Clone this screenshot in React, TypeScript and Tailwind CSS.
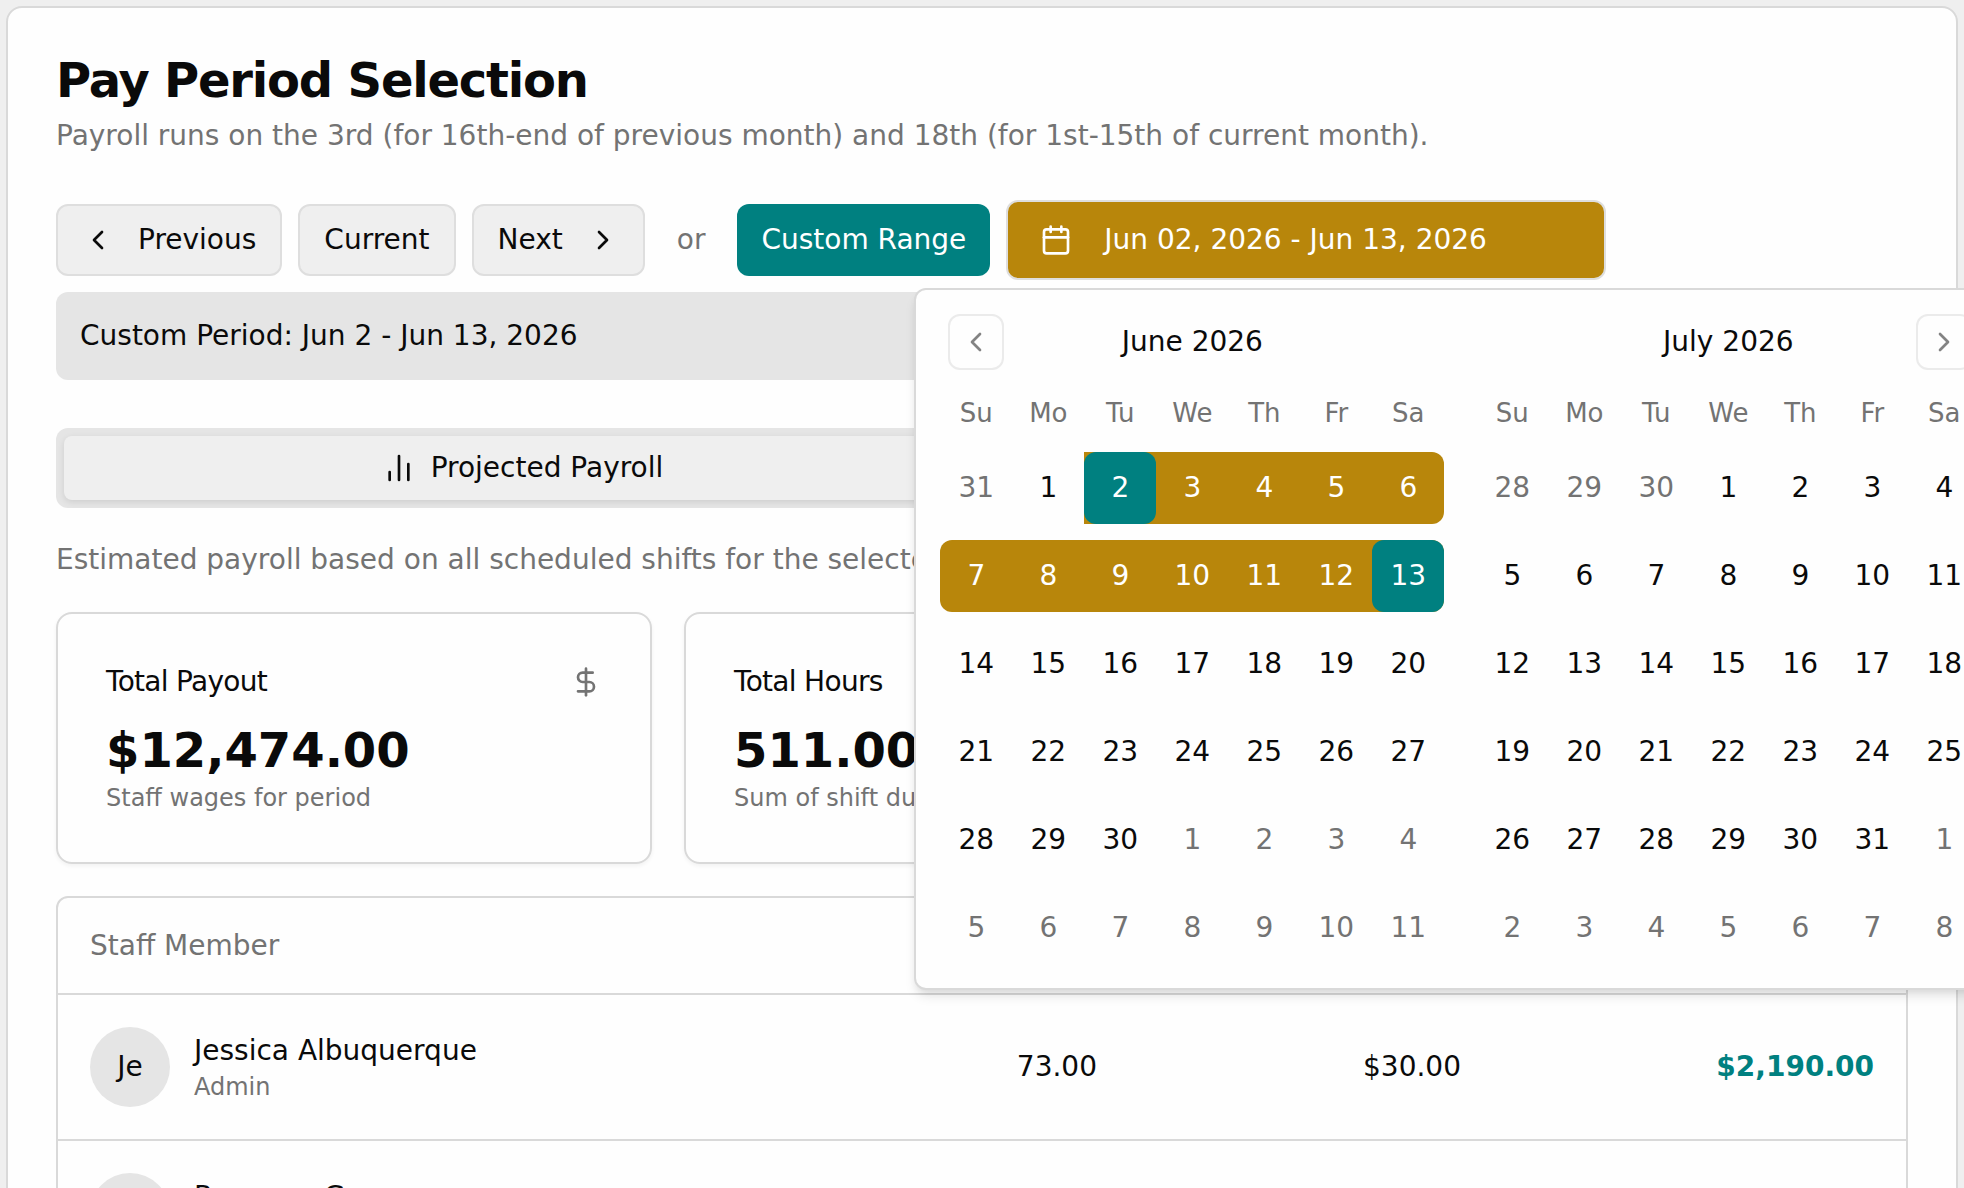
import { useState } from 'react'
import { Calendar as CalendarIcon, ChartNoAxesColumn, ChevronLeft, ChevronRight, Clock, DollarSign, History, Users } from 'lucide-react'
import type { LucideIcon } from 'lucide-react'
import clsx from 'clsx'

const WEEKDAYS = ['Su', 'Mo', 'Tu', 'We', 'Th', 'Fr', 'Sa']
const MONTHS = ['January', 'February', 'March', 'April', 'May', 'June', 'July', 'August', 'September', 'October', 'November', 'December']

const STAFF = [
  { name: 'Jessica Albuquerque', role: 'Admin', hours: 73, rate: 30 },
  { name: 'Roxanne Gomes', role: 'Staff', hours: 73, rate: 26 },
]

const money = (n: number) => '$' + n.toLocaleString('en-US', { minimumFractionDigits: 2 })

// always six weeks, so both months keep the same height
function getWeeks(year: number, month: number) {
  const offset = new Date(year, month, 1).getDay()
  return Array.from({ length: 6 }, (_, w) =>
    Array.from({ length: 7 }, (_, d) => new Date(year, month, 1 - offset + w * 7 + d))
  )
}

type MonthProps = {
  year: number
  month: number
  from: Date
  to: Date
  onPrev?: () => void
  onNext?: () => void
}

function NavButton({ label, icon: Icon, onClick }: { label: string; icon: LucideIcon; onClick: () => void }) {
  return (
    <button
      aria-label={label}
      onClick={onClick}
      className="flex size-14 items-center justify-center rounded-xl border-2 border-[#d9d9d9] opacity-50 hover:opacity-100"
    >
      <Icon className="size-8" />
    </button>
  )
}

function Month({ year, month, from, to, onPrev, onNext }: MonthProps) {
  return (
    <div>
      <div className="flex h-14 items-center justify-between px-2">
        <div className="w-14">{onPrev && <NavButton label="Previous month" icon={ChevronLeft} onClick={onPrev} />}</div>
        <div className="text-[28px] leading-10">{MONTHS[month]} {year}</div>
        <div className="w-14">{onNext && <NavButton label="Next month" icon={ChevronRight} onClick={onNext} />}</div>
      </div>
      <table className="mt-6 block">
        <thead className="block pb-1">
          <tr className="flex">
            {WEEKDAYS.map((day) => (
              <th key={day} className="w-18 p-0 text-center text-[26px] leading-[38px] font-normal text-[#737373]">{day}</th>
            ))}
          </tr>
        </thead>
        <tbody className="block">
          {getWeeks(year, month).map((week, w) => (
            <tr key={w} className="mt-4 flex">
              {week.map((day, d) => {
                const outside = day.getMonth() !== month
                const inRange = !outside && day >= from && day <= to
                const isStart = !outside && +day === +from
                const isEnd = !outside && +day === +to
                return (
                  <td
                    key={d}
                    className={clsx(
                      'size-18 p-0',
                      inRange && 'bg-[#b8860b]',
                      inRange && d === 0 && 'rounded-l-xl',
                      inRange && (d === 6 || isEnd) && 'rounded-r-xl'
                    )}
                  >
                    <button
                      className={clsx(
                        'size-18 rounded-xl text-[28px] leading-10',
                        outside && 'text-[#737373]',
                        inRange && 'text-white',
                        (isStart || isEnd) && 'bg-[#008080]'
                      )}
                    >
                      {day.getDate()}
                    </button>
                  </td>
                )
              })}
            </tr>
          ))}
        </tbody>
      </table>
    </div>
  )
}

function SummaryCard({ title, value, note, icon: Icon }: { title: string; value: string; note: string; icon: LucideIcon }) {
  return (
    <div className="rounded-2xl border-2 border-[#d9d9d9] p-12 shadow-[0_2px_4px_rgba(0,0,0,0.05)]">
      <div className="flex items-center justify-between pb-4">
        <h3 className="text-[28px] leading-10 tracking-tight">{title}</h3>
        <Icon className="size-8 text-[#737373]" />
      </div>
      <div className="text-5xl leading-16 font-bold">{value}</div>
      <p className="text-2xl leading-8 text-[#737373]">{note}</p>
    </div>
  )
}

export default function App() {
  const [tab, setTab] = useState('projected')
  const [open, setOpen] = useState(true)
  const [first, setFirst] = useState(new Date(2026, 5, 1))
  const from = new Date(2026, 5, 2)
  const to = new Date(2026, 5, 13)
  const second = new Date(first.getFullYear(), first.getMonth() + 1, 1)
  const shift = (n: number) => setFirst(new Date(first.getFullYear(), first.getMonth() + n, 1))

  const navButton = 'flex h-18 items-center gap-6 rounded-xl border-2 border-[#dedede] bg-[#efefef] px-6'
  const tabButton = 'flex h-16 flex-1 items-center justify-center gap-4 rounded-lg'
  const activeTab = 'bg-[#efefef] text-[#0a0a0a] shadow-[0_2px_6px_rgba(0,0,0,0.1)]'

  return (
    <div className="h-screen overflow-hidden bg-[#efefef] p-1.5 font-['DejaVu_Sans',sans-serif] text-[28px] leading-10 text-[#0a0a0a]">
      <main className="min-h-[120vh] rounded-2xl border-2 border-[#d9d9d9] bg-[#fefefe] p-12">
        <h1 className="text-5xl leading-12 font-bold tracking-tight">Pay Period Selection</h1>
        <p className="mt-3 text-[#737373]">
          Payroll runs on the 3rd (for 16th-end of previous month) and 18th (for 1st-15th of current month).
        </p>

        {/* Period controls */}
        <div className="mt-12 flex h-18 items-center gap-4">
          <button className={navButton}>
            <ChevronLeft className="size-8" />
            Previous
          </button>
          <button className={navButton}>Current</button>
          <button className={navButton}>
            Next
            <ChevronRight className="size-8" />
          </button>
          <span className="mx-4 text-[#737373]">or</span>
          <button className="h-18 rounded-xl bg-[#008080] px-6 text-white">Custom Range</button>

          <div className="relative">
            <button
              onClick={() => setOpen(!open)}
              className="flex h-20 w-[600px] items-center gap-8 rounded-xl border-2 border-[#dedede] bg-[#b8860b] px-8 text-white"
            >
              <CalendarIcon className="size-8" />
              Jun 02, 2026 - Jun 13, 2026
            </button>
            {open && (
              <div className="absolute top-full -left-[92px] z-10 mt-2 flex gap-8 rounded-xl border-2 border-[#d9d9d9] bg-[#fefefe] p-6 shadow-[0_8px_12px_-2px_rgba(0,0,0,0.1),0_4px_8px_-4px_rgba(0,0,0,0.1)]">
                <Month year={first.getFullYear()} month={first.getMonth()} from={from} to={to} onPrev={() => shift(-1)} />
                <Month year={second.getFullYear()} month={second.getMonth()} from={from} to={to} onNext={() => shift(1)} />
              </div>
            )}
          </div>
        </div>

        <div className="mt-4 rounded-xl bg-[#e5e5e5] p-6">Custom Period: Jun 2 - Jun 13, 2026</div>

        {/* Tabs */}
        <div className="mt-12 flex rounded-xl bg-[#e5e5e5] p-2">
          <button className={clsx(tabButton, tab === 'projected' && activeTab)} onClick={() => setTab('projected')}>
            <ChartNoAxesColumn className="size-8" />
            Projected Payroll
          </button>
          <button className={clsx(tabButton, tab === 'actual' && activeTab)} onClick={() => setTab('actual')}>
            <History className="size-8" />
            Actual Payroll
          </button>
        </div>
        <p className="mt-8 text-[#737373]">Estimated payroll based on all scheduled shifts for the selected period.</p>

        {/* Summary */}
        <div className="mt-8 grid grid-cols-3 gap-8">
          <SummaryCard title="Total Payout" value="$12,474.00" note="Staff wages for period" icon={DollarSign} />
          <SummaryCard title="Total Hours" value="511.00" note="Sum of shift durations" icon={Clock} />
          <SummaryCard title="Staff Count" value="7" note="Staff with shifts" icon={Users} />
        </div>

        {/* Staff table */}
        <div className="mt-8 rounded-xl border-2 border-[#d9d9d9]">
          <table className="w-full table-fixed">
            <thead>
              <tr className="h-24 border-b-2 border-[#d9d9d9] text-[#737373]">
                <th className="px-8 text-left font-normal">Staff Member</th>
                <th className="w-[300px] px-8 text-right font-normal">Hours</th>
                <th className="w-[364px] px-8 text-right font-normal">Rate</th>
                <th className="w-[413px] px-8 text-right font-normal">Total</th>
              </tr>
            </thead>
            <tbody>
              {STAFF.map((s) => (
                <tr key={s.name} className="border-b-2 border-[#d9d9d9]">
                  <td className="px-8 py-8">
                    <div className="flex items-center gap-6">
                      <div className="flex size-20 items-center justify-center rounded-full bg-[#e5e5e5]">{s.name.slice(0, 2)}</div>
                      <div>
                        <div>{s.name}</div>
                        <div className="text-2xl leading-8 text-[#737373]">{s.role}</div>
                      </div>
                    </div>
                  </td>
                  <td className="px-8 text-right">{s.hours.toFixed(2)}</td>
                  <td className="px-8 text-right">{money(s.rate)}</td>
                  <td className="px-8 text-right font-bold text-[#008080]">{money(s.hours * s.rate)}</td>
                </tr>
              ))}
            </tbody>
          </table>
        </div>
      </main>
    </div>
  )
}
